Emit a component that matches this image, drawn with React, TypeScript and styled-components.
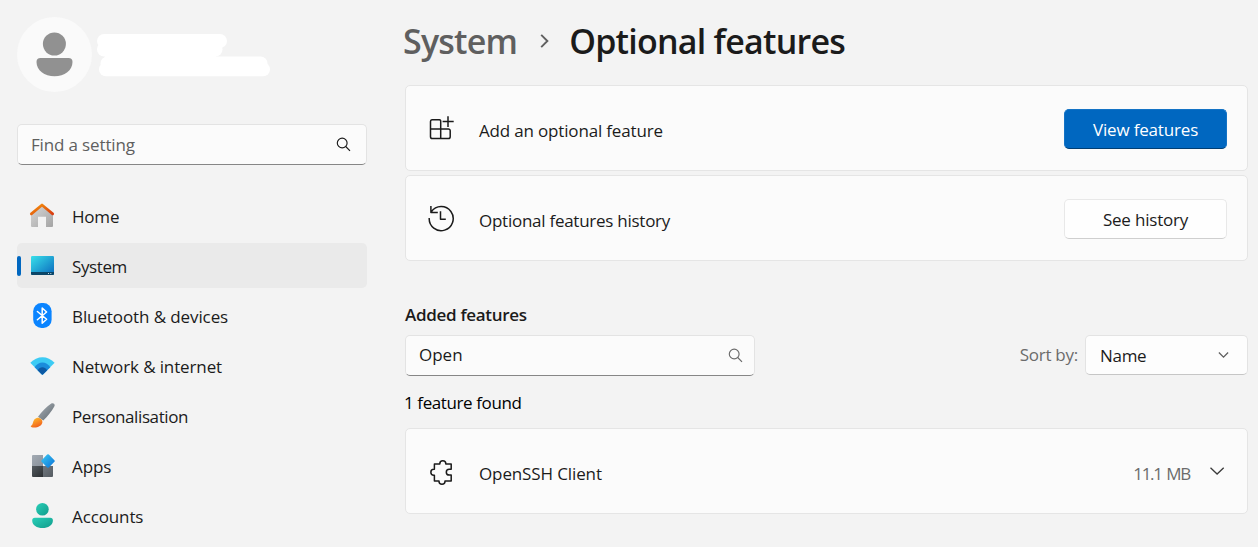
import React from "react";
import styled, { createGlobalStyle } from "styled-components";

const GlobalStyle = createGlobalStyle`
  *, *::before, *::after { box-sizing: border-box; }
  body {
    margin: 0;
    background: #f3f3f3;
    color: #1b1b1b;
    font-family: "Open Sans", "Noto Sans", sans-serif;
    font-size: 17px;
    line-height: 24px;
    overflow: hidden;
  }
  svg { display: block; flex: none; }
`;

const Page = styled.div`
  display: flex;
  gap: 38px;
  width: 1258px;
  height: 547px;
  padding-left: 17px;
  overflow: hidden;
`;

const Sidebar = styled.aside`
  display: flex;
  flex-direction: column;
  width: 350px;
  flex: none;
  padding-top: 17px;
`;

const Profile = styled.div`
  display: flex;
  gap: 4px;
  height: 75px;
  margin-bottom: 32px;
`;

const Avatar = styled.div`
  width: 75px;
  height: 75px;
  border-radius: 50%;
  background: #fafafa;
`;

const Field = styled.div<{ $end?: number }>`
  display: flex;
  align-items: center;
  justify-content: space-between;
  width: 350px;
  height: 41px;
  padding: 0 ${(p) => p.$end ?? 15}px 0 13px;
  border: 1px solid #e3e3e3;
  border-bottom-color: #868686;
  border-radius: 5px;
  background: #fbfbfb;
`;

const Label = styled.span<{ $track?: number; $color?: string; $shift?: number }>`
  white-space: nowrap;
  letter-spacing: ${(p) => p.$track ?? -0.3}px;
  color: ${(p) => p.$color ?? "#1b1b1b"};
  padding-top: ${(p) => p.$shift ?? 0}px;
`;

const FieldValue = styled(Label)`
  padding-bottom: 2px;
`;

const Nav = styled.nav`
  display: flex;
  flex-direction: column;
  gap: 5px;
  margin-top: 28px;
`;

const NavItem = styled.div<{ $active?: boolean }>`
  position: relative;
  display: flex;
  align-items: center;
  gap: 17px;
  height: 45px;
  flex: none;
  padding-left: 12px;
  border-radius: 5px;
  background: ${(p) => (p.$active ? "#eaeaea" : "transparent")};
`;

const ActiveMark = styled.span`
  position: absolute;
  left: 0;
  top: 13px;
  width: 4px;
  height: 20px;
  border-radius: 2px;
  background: #0067c0;
`;

const Main = styled.main`
  display: flex;
  flex-direction: column;
  width: 843px;
  flex: none;
`;

const Breadcrumb = styled.h1`
  display: flex;
  align-items: center;
  height: 85px;
  margin: 0 0 0 -2px;
  padding-bottom: 4px;
  font-size: 34px;
  font-weight: 600;
  line-height: 46px;
`;

const Crumb = styled.span<{ $color: string; $track: number }>`
  color: ${(p) => p.$color};
  letter-spacing: ${(p) => p.$track}px;
  white-space: nowrap;
`;

const CrumbArrow = styled.svg`
  margin: 1px 19px 0 23px;
`;

const Cards = styled.div`
  display: flex;
  flex-direction: column;
  gap: 4px;
`;

const Card = styled.section`
  display: flex;
  align-items: center;
  height: 86px;
  padding: 0 20px 0 21px;
  border: 1px solid #e5e5e5;
  border-radius: 5px;
  background: #fbfbfb;
`;

const CardTitle = styled(Label)`
  flex: 1;
  margin-left: 24px;
  padding-top: 5px;
`;

const Button = styled.button<{ $primary?: boolean }>`
  display: flex;
  align-items: center;
  justify-content: center;
  width: 163px;
  height: 40px;
  margin-top: 2px;
  padding: 2px 0 0;
  font: inherit;
  border-radius: 5px;
  border: 1px solid ${(p) => (p.$primary ? "#1473c5" : "#e8e8e8")};
  border-bottom-color: ${(p) => (p.$primary ? "#003e73" : "#cfcfcf")};
  background: ${(p) => (p.$primary ? "#0067c0" : "#fefefe")};
`;

const SectionTitle = styled.h2`
  margin: 42px 0 8px;
  font-size: 17px;
  line-height: 24px;
  font-weight: 600;
  letter-spacing: -0.3px;
`;

const Filters = styled.div`
  display: flex;
  justify-content: space-between;
  height: 41px;
`;

const Sort = styled.div`
  display: flex;
  align-items: center;
  height: 40px;
  gap: 7px;
`;

const Select = styled.div`
  display: flex;
  align-items: center;
  justify-content: space-between;
  width: 163px;
  height: 40px;
  padding: 0 17px 0 14px;
  border: 1px solid #e3e3e3;
  border-bottom-color: #c6c6c6;
  border-radius: 5px;
  background: #fdfdfd;
`;

const Count = styled.p`
  margin: 15px 0 13px -1px;
  color: #000;
  letter-spacing: -0.4px;
`;

const Size = styled(Label)`
  padding-top: 5px;
  margin-right: 20px;
  word-spacing: 1.5px;
`;

const ExpandIcon = styled.svg`
  margin-right: 1px;
`;

const SearchIcon = ({ color }: { color: string }) => (
  <svg width="15" height="15" viewBox="0 0 15 15" fill="none" stroke={color} strokeWidth="1.15">
    <circle cx="6.2" cy="6" r="4.900" />
    <path d="M9.700 9.500 14 13.800" />
  </svg>
);

const Grad = ({ id, from, to }: { id: string; from: string; to: string }) => (
  <linearGradient id={id} x1="0" y1="0" x2="1" y2="1">
    <stop offset="0" stopColor={from} />
    <stop offset="1" stopColor={to} />
  </linearGradient>
);

const NavIcon = ({ children }: { children: React.ReactNode }) => (
  <svg width="26" height="27" viewBox="0 0 26 27">{children}</svg>
);

const HomeIcon = () => (
  <NavIcon>
    <defs>
      <Grad id="wall" from="#d8d8d8" to="#a4a4a4" />
      <Grad id="roof" from="#f6950c" to="#d83b10" />
    </defs>
    <path d="M2 11.5 13 3l11 8.500V24a1 1 0 0 1-1 1h-6V14.700H9V25H3a1 1 0 0 1-1-1Z" fill="url(#wall)" />
    <path d="M2.300 11.900 13 3l10.700 8.900" fill="none" stroke="url(#roof)" strokeWidth="2.700" strokeLinecap="round" strokeLinejoin="round" />
  </NavIcon>
);

const SystemIcon = () => (
  <NavIcon>
    <defs><Grad id="screen" from="#38e0ea" to="#0a68bd" /></defs>
    <rect x="2" y="4" width="23" height="19" rx="1.200" fill="url(#screen)" />
    <path d="M2 20h23v1.800a1.200 1.200 0 0 1-1.200 1.200H3.200A1.200 1.200 0 0 1 2 21.800Z" fill="#0b4668" />
    <path d="M19 21h1v1h-1zM21.300 21h1v1h-1z" fill="#c5dbe6" />
  </NavIcon>
);

const BluetoothIcon = () => (
  <NavIcon>
    <rect x="4.200" y="1" width="18.400" height="25" rx="8.200" fill="#0a84ff" />
    <path d="M8.400 9.500 17.600 17.300 13.200 21.300V6l4.400 4-9.200 7.800" fill="none" stroke="#fff" strokeWidth="1.500" strokeLinejoin="round" strokeLinecap="round" />
  </NavIcon>
);

const NetworkIcon = () => (
  <NavIcon>
    <path d="M1.300 10.800C8 3.300 19 3.300 25.600 10.800L14.200 22.300q-.8.800-1.600 0Z" fill="#3ccbf4" />
    <path d="M5.600 15.200C9.500 8.900 17.400 8.900 21.300 15.200L14.200 22.300q-.8.800-1.600 0Z" fill="#1a8cdb" />
    <path d="M8.600 18.300C11 14.200 15.800 14.200 18.200 18.300L14.200 22.300q-.8.800-1.600 0Z" fill="#0c59a4" />
  </NavIcon>
);

const BrushIcon = () => (
  <NavIcon>
    <defs>
      <Grad id="handle" from="#a9b0b7" to="#606970" />
      <linearGradient id="bristle" x1="0.200" y1="0" x2="0.700" y2="1">
        <stop offset="0" stopColor="#ffbe2c" />
        <stop offset="1" stopColor="#f0591b" />
      </linearGradient>
    </defs>
    <path d="M22.300 1.600c1.900-1.300 4.300.7 3 2.800-2.800 5-6.500 9.700-11 14L9 14.800C12.800 9.700 17.300 5 22.300 1.600Z" fill="url(#handle)" />
    <path d="M5.300 17.600c2.700-3 5.400-2.100 7-.4 2 2.200 1.100 5.300-1.600 6.900-2.800 1.800-6.500 1.900-8.500.8-.8-.5-.3-1 .3-1.300 1.500-1 1.200-4 2.800-6Z" fill="url(#bristle)" />
  </NavIcon>
);

const AppsIcon = () => (
  <NavIcon>
    <defs>
      <Grad id="tileA" from="#a3aab3" to="#8a929b" />
      <Grad id="tileB" from="#555b60" to="#2b2f32" />
      <Grad id="tileC" from="#70777e" to="#555b61" />
      <Grad id="gem" from="#3ccbf4" to="#0a70d6" />
    </defs>
    <path d="M4 3h10v11H3V4a1 1 0 0 1 1-1Z" fill="url(#tileA)" />
    <path d="M3 14h11v11H4a1 1 0 0 1-1-1Z" fill="url(#tileB)" />
    <path d="M14 14h10v10a1 1 0 0 1-1 1h-9Z" fill="url(#tileC)" />
    <path d="M18.200 2.600q.8-.8 1.600 0l5.600 5.600q.8.800 0 1.600l-5.600 5.600q-.8.800-1.600 0l-5.600-5.600q-.8-.8 0-1.600Z" fill="url(#gem)" />
  </NavIcon>
);

const AccountsIcon = () => (
  <NavIcon>
    <defs><Grad id="person" from="#29cfb8" to="#119c8b" /></defs>
    <circle cx="13.400" cy="7.300" r="6.300" fill="url(#person)" />
    <path d="M5.800 15.800H21.300a2.600 2.600 0 0 1 2.600 2.600C23.900 23.200 19 26 13.500 26S3.200 23.200 3.200 18.400a2.600 2.600 0 0 1 2.600-2.600Z" fill="url(#person)" />
  </NavIcon>
);

const LineIcon = ({ d }: { d: string }) => (
  <svg width="28" height="28" viewBox="0 0 28 28" fill="none" stroke="#1b1b1b" strokeWidth="1.500" strokeLinejoin="round">
    <path d={d} />
  </svg>
);

const addPath =
  "M5 5.800H12.500a1.200 1.200 0 0 1 1.200 1.200V14.900H21.400a1.800 1.800 0 0 1 1.800 1.800V22.800a1.800 1.800 0 0 1-1.800 1.800H5.300a1.800 1.800 0 0 1-1.800-1.800V7.600A1.800 1.800 0 0 1 5 5.800ZM3.500 14.900H13.700V24.600M21 2.200V13M15.600 7.500H26.700";
const historyPath =
  "M2.200 14A12 12 0 1 0 4.300 7.800M3.900 2V8.500H10.800M13.500 7.300V15.300H18.800";
const puzzlePath =
  "M7.400 7H12.800V6.700a3 3 0 0 1 6 0V7H24.200V12.300H22.200a2.900 2.900 0 0 0 0 5.800H24.200V23.900H18V24.200a3 3 0 0 1-6 0V23.900H7.400V18.200H6.800a2.950 2.950 0 0 1 0-5.900H7.400Z";

const navItems = [
  { label: "Home", icon: <HomeIcon />, track: -0.2 },
  { label: "System", icon: <SystemIcon />, track: -0.4, active: true },
  { label: "Bluetooth & devices", icon: <BluetoothIcon />, track: -0.1 },
  { label: "Network & internet", icon: <NetworkIcon />, track: -0.12 },
  { label: "Personalisation", icon: <BrushIcon />, track: -0.4 },
  { label: "Apps", icon: <AppsIcon />, track: -0.1 },
  { label: "Accounts", icon: <AccountsIcon />, track: -0.12 },
];

export default function App() {
  return (
    <>
      <GlobalStyle />
      <Page>
        <Sidebar>
          <Profile>
            <Avatar>
              <svg width="75" height="75" viewBox="0 0 75 75" fill="#919191">
                <circle cx="37.400" cy="27" r="11.500" />
                <path d="M23.500 41H51.500a4 4 0 0 1 4 4C55.500 53.500 47.500 59.300 37.500 59.300S19.500 53.500 19.500 45a4 4 0 0 1 4-4Z" />
              </svg>
            </Avatar>
            <svg width="176" height="75" viewBox="96 17 176 75" fill="#fff">
              <rect x="97" y="34" width="130" height="14" rx="7" />
              <rect x="97" y="42" width="125.500" height="14.500" rx="7" />
              <rect x="100.500" y="56.500" width="167" height="14" rx="7" />
              <rect x="99" y="62.500" width="171" height="13.700" rx="6.800" />
              <path d="M104 54H216V60H106Z" />
            </svg>
          </Profile>
          <Field>
            <Label $color="#5f5f5f" $track={-0.15}>Find a setting</Label>
            <SearchIcon color="#1b1b1b" />
          </Field>
          <Nav>
            {navItems.map((item) => (
              <NavItem key={item.label} $active={item.active}>
                {item.active && <ActiveMark />}
                {item.icon}
                <Label $track={item.track} $shift={2}>{item.label}</Label>
              </NavItem>
            ))}
          </Nav>
        </Sidebar>
        <Main>
          <Breadcrumb>
            <Crumb $color="#5f5f5f" $track={-0.8}>System</Crumb>
            <CrumbArrow width="10" height="16" viewBox="0 0 10 16" fill="none" stroke="#5f5f5f" strokeWidth="1.900">
              <path d="M1.200 1.800 7.400 8 1.200 14.200" />
            </CrumbArrow>
            <Crumb $color="#1b1b1b" $track={-0.75}>Optional features</Crumb>
          </Breadcrumb>
          <Cards>
            <Card>
              <LineIcon d={addPath} />
              <CardTitle $track={-0.17}>Add an optional feature</CardTitle>
              <Button $primary><Label $color="#fff" $track={-0.17}>View features</Label></Button>
            </Card>
            <Card>
              <LineIcon d={historyPath} />
              <CardTitle $track={-0.26}>Optional features history</CardTitle>
              <Button><Label $track={-0.2}>See history</Label></Button>
            </Card>
          </Cards>
          <SectionTitle>Added features</SectionTitle>
          <Filters>
            <Field $end={11}>
              <FieldValue $track={0}>Open</FieldValue>
              <SearchIcon color="#6b6b6b" />
            </Field>
            <Sort>
              <Label $color="#6b6b6b" $track={-0.25}>Sort by:</Label>
              <Select>
                <Label $shift={2}>Name</Label>
                <svg width="12" height="8" viewBox="0 0 12 8" fill="none" stroke="#5f5f5f" strokeWidth="1.300">
                  <path d="M.9 1.500 5.500 6.100 10.100 1.500" />
                </svg>
              </Select>
            </Sort>
          </Filters>
          <Count>1 feature found</Count>
          <Card>
            <LineIcon d={puzzlePath} />
            <CardTitle $track={-0.12}>OpenSSH Client</CardTitle>
            <Size $color="#6b6b6b" $track={-1.3}>11.1 MB</Size>
            <ExpandIcon width="16" height="10" viewBox="0 0 16 10" fill="none" stroke="#3a3a3a" strokeWidth="1.300">
              <path d="M.5 1.700 7.100 8 13.700 1.700" />
            </ExpandIcon>
          </Card>
        </Main>
      </Page>
    </>
  );
}
